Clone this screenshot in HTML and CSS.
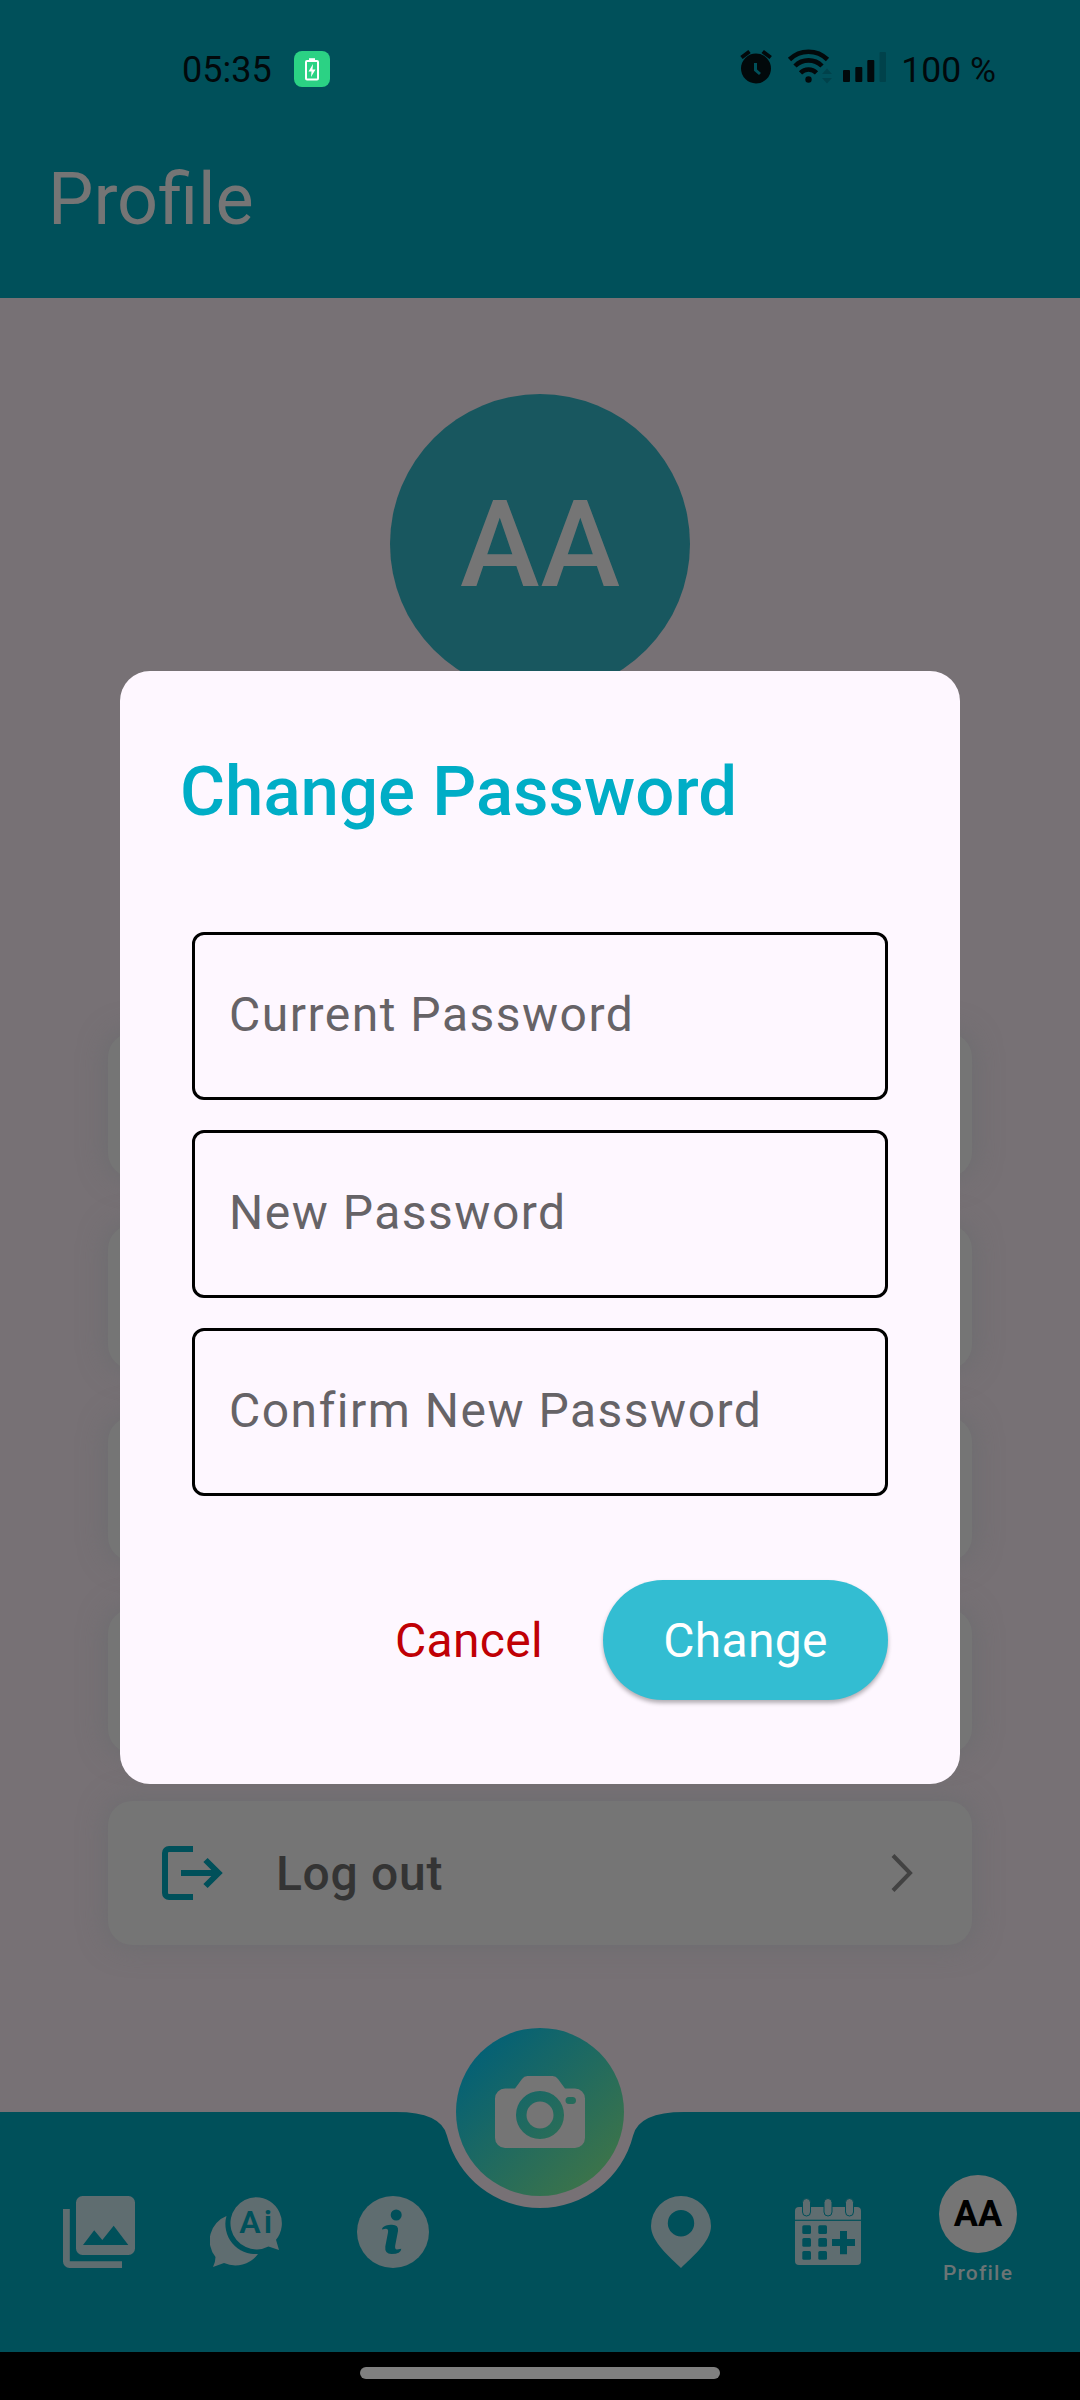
FILE: index.html
```html
<!DOCTYPE html>
<html lang="en">
<head>
<meta charset="utf-8">
<title>Profile</title>
<link rel="stylesheet" href="styles.css">
</head>
<body>
<div class="screen">
  <header class="header">
    <div class="status">
      <div class="status-left">
        <span class="clock">05:35</span>
        <span class="charge">
          <svg width="36" height="36" viewBox="0 0 36 36"><path d="M15 7.200h6v2h-6z" fill="#fff"/><rect x="12" y="10" width="12" height="18.500" rx="1" fill="none" stroke="#fff" stroke-width="2"/><path d="M19 13l-4.500 7.500h3L17 26l4.500-7.500h-3z" fill="#fff"/></svg>
        </span>
      </div>
      <div class="status-right">
        <svg class="status-icons" width="150" height="40" viewBox="740 50 150 40" fill="#02090b">
          <circle cx="757" cy="69.500" r="15"/>
          <path d="M742.500 58.500l8-6M763.700 52.500l8 6" stroke="#02090b" stroke-width="4" fill="none"/>
          <path d="M756.500 64v7l4.500 4" stroke="#00505a" stroke-width="3" fill="none"/>
          <g fill="none" stroke="#02090b" stroke-width="4.600"><path d="M790.500 60.500a27 27 0 0 1 38 0M796 67a19 19 0 0 1 27 0M801.500 73.800a11.500 11.500 0 0 1 16 0"/></g>
          <circle cx="809.500" cy="80.500" r="3.200"/>
          <path d="M823 75l5-5.500 5 5.500zM823 79h10l-5 5.500z" fill="#00424b"/>
          <rect x="844" y="71" width="7" height="12" rx="1"/><rect x="856.300" y="68" width="7" height="15" rx="1"/><rect x="868.300" y="61" width="7" height="22" rx="1"/><rect x="880.500" y="53" width="6.500" height="30" rx="1" fill="#00424b"/>
        </svg>
        <span class="percent">100 %</span>
      </div>
    </div>
    <h1 class="title">Profile</h1>
  </header>

  <main class="content">
    <div class="avatar">AA</div>
    <div class="menu">
      <div class="card"></div>
      <div class="card"></div>
      <div class="card"></div>
      <div class="card"></div>
      <div class="card">
        <svg class="card-icon" width="61" height="54" viewBox="0 0 61 54" fill="none" stroke="#00505a" stroke-width="6"><path d="M31 3H7a4 4 0 0 0-4 4v40a4 4 0 0 0 4 4h24M19 27h37M43.500 14L56.500 27 43.500 40"/></svg>
        <span class="card-label">Log out</span>
        <svg class="chevron" width="24" height="40" viewBox="0 0 24 40" fill="none" stroke="#424242" stroke-width="4"><path d="M3 2.500L20 20 3 37.500"/></svg>
      </div>
    </div>
  </main>

  <nav class="nav">
    <svg class="nav-shape" width="1080" height="240" viewBox="0 0 1080 240"><path fill="#00505a" d="M0 0H396Q441 0 446.910 23.450A96 96 0 0 0 633.090 23.450Q639 0 684 0H1080V240H0Z"/></svg>
    <div class="fab">
      <svg width="90" height="72" viewBox="0 0 90 72"><path fill="#757575" fill-rule="evenodd" d="M10 12.500h10l7-9.500a7 7 0 0 1 5.500-3h25a7 7 0 0 1 5.500 3l7 9.500h10a10 10 0 0 1 10 10V62a10 10 0 0 1-10 10H10A10 10 0 0 1 0 62V22.500a10 10 0 0 1 10-10zM45 15a24 24 0 1 0 0 48 24 24 0 0 0 0-48zM74 21a3.500 3.500 0 0 0 0 7h3.500a3.500 3.500 0 0 0 0-7z"/><circle cx="45" cy="39" r="13.500" fill="#757575"/></svg>
    </div>
    <div class="nav-group">
      <div class="nav-item">
        <svg width="72" height="72" viewBox="63 2196 72 72" fill="#5f6d70"><path fill-rule="evenodd" d="M82.500 2196H128.500a6.500 6.500 0 0 1 6.500 6.500V2248.500a6.500 6.500 0 0 1-6.500 6.500H82.500a6.500 6.500 0 0 1-6.500-6.500V2202.500a6.500 6.500 0 0 1 6.500-6.500zM83 2245h45.300L113.700 2225.700 102.300 2240 94.200 2230.200z"/><path d="M63 2209h6.800v52.300H122v6.700H69.500a6.500 6.500 0 0 1-6.500-6.500z"/></svg>
      </div>
      <div class="nav-item">
        <svg width="72" height="72" viewBox="210 2196 72 72" fill="#5f6d70"><path d="M226.500 2216A26.300 26.300 0 0 0 215.500 2257Q215.500 2262 213 2267L224 2263A28 28 0 0 0 258 2254A30 30 0 0 1 226.500 2216z"/><path d="M256 2197.200A26.100 26.100 0 1 0 268.500 2246.500L279 2250 276 2239.800A26.100 26.100 0 0 0 256 2197.200z"/><text class="ai-text" x="239.200" y="2232.500">A</text><text class="ai-text ai-i" x="263.800" y="2232.500">i</text></svg>
      </div>
      <div class="nav-item">
        <svg width="72" height="72" viewBox="357 2196 72 72"><circle cx="393" cy="2232" r="36" fill="#5f6d70"/><circle cx="396.200" cy="2215" r="5.500" fill="#00505a"/><path fill="#00505a" d="M382 2229.500C382 2226 388 2224.700 392 2224.700Q398.800 2224.700 398 2231L395.200 2245.500Q394.600 2249.500 397 2249.500L401.300 2248.800Q401 2254 391.500 2254Q384.500 2254 385.300 2246.500L388 2232.500Q388.700 2228.500 385.500 2228.800Z"/></svg>
      </div>
    </div>
    <div class="nav-group">
      <div class="nav-item">
        <svg width="60" height="72" viewBox="0 0 60 72"><path fill="#5f6d70" fill-rule="evenodd" d="M30 0A30 30 0 0 0 0 30C0 46 20 62 30 72C40 62 60 46 60 30A30 30 0 0 0 30 0zM30 14a13.200 13.200 0 1 1 0 26.400 13.200 13.200 0 0 1 0-26.400z"/></svg>
      </div>
      <div class="nav-item">
        <svg width="72" height="72" viewBox="792 2196 72 72" fill="#5f6d70"><rect x="795" y="2207" width="66" height="58" rx="4"/><g fill="#00505a"><rect x="795" y="2219.700" width="66" height="1.200"/><rect x="802.300" y="2225.300" width="8.700" height="8.700" rx="1.500"/><rect x="818.300" y="2225.300" width="8.700" height="8.700" rx="1.500"/><rect x="802.300" y="2238" width="8.700" height="8.700" rx="1.500"/><rect x="818.300" y="2238" width="8.700" height="8.700" rx="1.500"/><rect x="802.300" y="2251" width="8.700" height="8.700" rx="1.500"/><rect x="818.300" y="2251" width="8.700" height="8.700" rx="1.500"/><path d="M840 2231h7v8h8v7h-8v8.300h-7V2246h-8v-7h8z"/></g><g stroke="#00505a" stroke-width="1"><rect x="802.500" y="2198.500" width="8" height="17.500" rx="4"/><rect x="824" y="2198.500" width="8" height="17.500" rx="4"/><rect x="845.500" y="2198.500" width="8" height="17.500" rx="4"/></g></svg>
      </div>
      <div class="nav-item nav-profile">
        <span class="mini-avatar">AA</span>
        <span class="nav-label">Profile</span>
      </div>
    </div>
  </nav>
  <div class="gesture"><span class="handle"></span></div>

  <section class="dialog" role="dialog">
    <h2 class="dialog-title">Change Password</h2>
    <div class="fields">
      <div class="field">Current Password</div>
      <div class="field">New Password</div>
      <div class="field">Confirm New Password</div>
    </div>
    <div class="actions">
      <span class="cancel">Cancel</span>
      <span class="change">Change</span>
    </div>
  </section>
</div>
</body>
</html>
```
FILE: styles.css
```css
* { box-sizing: border-box; }
body { margin: 0; font-family: Roboto, "Liberation Sans", sans-serif; }
svg { display: block; flex: none; }
h1, h2 { margin: 0; font-weight: 400; }

.screen {
  position: relative;
  width: 1080px;
  height: 2400px;
  display: grid;
  grid-template-rows: 298px 1814px 240px 48px;
  background: #777175;
  overflow: hidden;
  white-space: nowrap;
}

/* header */
.header { background: #00505a; padding-top: 49px; }
.status {
  display: flex;
  justify-content: space-between;
  align-items: center;
  height: 40px;
  padding: 0 84px 0 182px;
  font-size: 36px;
  line-height: 42px;
  color: #02090b;
}
.status-left, .status-right { display: flex; align-items: center; }
.status-left { gap: 22px; }
.clock, .percent { padding-top: 2px; }
.percent { font-size: 35.500px; }
.charge { width: 36px; height: 36px; border-radius: 8px; background: #2bd284; }
.status-right { gap: 12px; }
.title {
  margin: 69px 0 0 48px;
  font-size: 72px;
  line-height: 84px;
  color: #757575;
}

/* page content */
.content { display: flex; flex-direction: column; align-items: center; padding-top: 96px; }
.avatar {
  width: 300px;
  height: 300px;
  padding-left: 1px;
  border-radius: 50%;
  background: #18575f;
  color: #757575;
  font-size: 120px;
  font-weight: 500;
  line-height: 302px;
  letter-spacing: 1px;
  text-align: center;
}
.menu { display: grid; gap: 48px; width: 864px; margin-top: 339px; }
.card {
  display: flex;
  align-items: center;
  height: 144px;
  padding: 0 58px 0 54px;
  border-radius: 24px;
  background: #757575;
  box-shadow: 0 0 26px 3px rgba(100, 106, 108, 0.500);
}
.card-label {
  margin-left: 53px;
  padding-top: 2px;
  font-size: 48px;
  font-weight: 500;
  line-height: 56px;
  letter-spacing: 0.700px;
  color: #343434;
}
.chevron { margin-left: auto; }

/* bottom navigation */
.nav { position: relative; display: flex; gap: 141px; padding-left: 25.500px; }
.nav-shape { position: absolute; left: 0; top: 0; }
.fab {
  position: absolute;
  left: 456px;
  top: -84px;
  width: 168px;
  height: 168px;
  border-radius: 50%;
  display: grid;
  place-items: center;
  background: linear-gradient(135deg, #005f78 8%, #407547 92%);
}
.nav-group { position: relative; display: grid; grid-template-columns: repeat(3, 147px); }
.nav-item { display: flex; flex-direction: column; align-items: center; justify-content: center; }
.nav-profile { padding: 0 0 4px 6px; }
.mini-avatar {
  width: 78px;
  height: 78px;
  border-radius: 50%;
  background: #757575;
  color: #000;
  font-size: 36px;
  font-weight: 700;
  line-height: 78px;
  text-align: center;
}
.nav-label { margin-top: 7px; font-size: 21px; font-weight: 500; line-height: 26px; letter-spacing: 1.200px; color: #6b7475; }
.ai-text { font: 600 32px Roboto, sans-serif; fill: #00505a; }

.gesture { display: grid; place-items: center; background: #000; padding-bottom: 10px; }
.handle { width: 360px; height: 12px; margin-top: 4px; border-radius: 6px; background: #808080; }

/* dialog */
.dialog {
  position: absolute;
  left: 120px;
  top: 671px;
  width: 840px;
  height: 1113px;
  padding: 81px 72px 84px;
  border-radius: 30px;
  background: #fef7ff;
  display: flex;
  flex-direction: column;
}
.dialog-title { margin-left: -12px; font-size: 69px; font-weight: 500; line-height: 80px; color: #00adc6; }
.fields { display: grid; gap: 30px; margin-top: 100px; }
.field {
  height: 168px;
  padding: 0 0 3px 34px;
  border: 3px solid #000;
  border-radius: 12px;
  display: flex;
  align-items: center;
  font-size: 48px;
  line-height: 56px;
  letter-spacing: 1.500px;
  color: #666367;
}
.actions { display: flex; justify-content: flex-end; align-items: center; gap: 60px; margin-top: 84px; font-size: 48px; letter-spacing: 0.300px; }
.cancel { color: #c00005; }
.change {
  width: 285px;
  height: 120px;
  border-radius: 60px;
  line-height: 121px;
  text-align: center;
  background: #33bdd2;
  color: #fff;
  box-shadow: 0 3px 4px rgba(0, 0, 0, 0.300);
}
```
